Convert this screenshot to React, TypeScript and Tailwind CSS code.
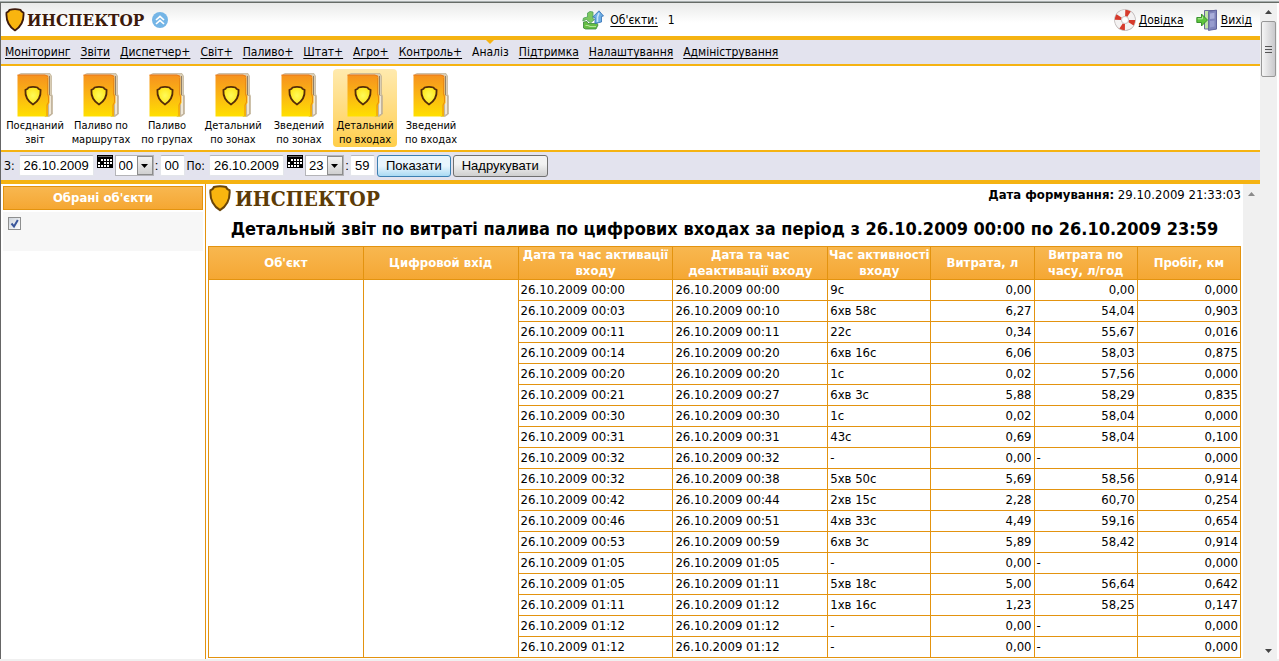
import { useState } from 'react';
import clsx from 'clsx';

const menuItems = [
  'Моніторинг',
  'Звіти',
  'Диспетчер+',
  'Світ+',
  'Паливо+',
  'Штат+',
  'Агро+',
  'Контроль+',
  'Аналіз',
  'Підтримка',
  'Налаштування',
  'Адміністрування',
];

const reports = [
  ['Поєднаний', 'звіт'],
  ['Паливо по', 'маршрутах'],
  ['Паливо', 'по групах'],
  ['Детальний', 'по зонах'],
  ['Зведений', 'по зонах'],
  ['Детальний', 'по входах'],
  ['Зведений', 'по входах'],
];

const columns = [
  { title: "Об'єкт", width: 'w-[15%]' },
  { title: 'Цифровой вхід', width: 'w-[15%]' },
  { title: 'Дата та час активації входу', width: 'w-[15%]' },
  { title: 'Дата та час деактивації входу', width: 'w-[15%]' },
  { title: 'Час активності входу', width: 'w-[10%]' },
  { title: 'Витрата, л', width: 'w-[10%]' },
  { title: 'Витрата по часу, л/год', width: 'w-[10%]' },
  { title: 'Пробіг, км', width: 'w-[10%]' },
];

// start, end, duration, fuel, fuel per hour, distance
const rows = [
  ['00:00', '00:00', '9с', '0,00', '0,00', '0,000'],
  ['00:03', '00:10', '6хв 58с', '6,27', '54,04', '0,903'],
  ['00:11', '00:11', '22с', '0,34', '55,67', '0,016'],
  ['00:14', '00:20', '6хв 16с', '6,06', '58,03', '0,875'],
  ['00:20', '00:20', '1с', '0,02', '57,56', '0,000'],
  ['00:21', '00:27', '6хв 3с', '5,88', '58,29', '0,835'],
  ['00:30', '00:30', '1с', '0,02', '58,04', '0,000'],
  ['00:31', '00:31', '43с', '0,69', '58,04', '0,100'],
  ['00:32', '00:32', '-', '0,00', '-', '0,000'],
  ['00:32', '00:38', '5хв 50с', '5,69', '58,56', '0,914'],
  ['00:42', '00:44', '2хв 15с', '2,28', '60,70', '0,254'],
  ['00:46', '00:51', '4хв 33с', '4,49', '59,16', '0,654'],
  ['00:53', '00:59', '6хв 3с', '5,89', '58,42', '0,914'],
  ['01:05', '01:05', '-', '0,00', '-', '0,000'],
  ['01:05', '01:11', '5хв 18с', '5,00', '56,64', '0,642'],
  ['01:11', '01:12', '1хв 16с', '1,23', '58,25', '0,147'],
  ['01:12', '01:12', '-', '0,00', '-', '0,000'],
  ['01:12', '01:12', '-', '0,00', '-', '0,000'],
];

function Shield({ className, stroke }: { className: string; stroke: string }) {
  return (
    <svg className={className} viewBox="0 0 20 24" aria-hidden="true">
      <path
        d="M4.5 1.8Q10 .4 15.5 1.8Q16 4 18.5 4.6Q19.4 16.5 10 22.4Q.6 16.5 1.5 4.6Q4 4 4.5 1.8Z"
        fill="#f9b50f"
        stroke={stroke}
        strokeWidth="1.8"
        strokeLinejoin="round"
      />
    </svg>
  );
}

function BookIcon() {
  return (
    <svg className="h-11 w-9" viewBox="0 0 36 44" aria-hidden="true">
      <defs>
        <linearGradient id="cover" x1="0" y1="0" x2="0" y2="1">
          <stop offset="0" stopColor="#f6921e" />
          <stop offset=".5" stopColor="#fbb713" />
          <stop offset="1" stopColor="#ffe000" />
        </linearGradient>
        <radialGradient id="emblem">
          <stop offset="0" stopColor="#fffb5a" />
          <stop offset="1" stopColor="#ffe61a" />
        </radialGradient>
      </defs>
      <path d="M2 1.5L4 .5H33L34.5 3V21L35.5 23V41L32 43.5H28Z" fill="#d9cdb4" stroke="#b8a88a" strokeWidth=".6" />
      <path d="M32 3H33V22H32Z" fill="#8f7f6a" />
      <path d="M31.5 22.5H34.5V41L31.5 42.5Z" fill="#efe7d6" stroke="#a3917a" strokeWidth=".5" />
      <path d="M.5 2H29Q31.5 2 31.5 4.5V21L32.5 23V30L31 32V43.5H.5Z" fill="url(#cover)" />
      <path d="M.5 2H28L31 3.5" fill="none" stroke="#e8791a" strokeWidth="1" />
      <path d="M30.5 5V21L31.5 24V29L30 32V43" fill="none" stroke="#e98a12" strokeWidth="1" />
      <path d="M11.5 14.5Q16 13.4 20.5 14.5Q21 16.2 23.6 16.8Q24.2 26.5 16 31.5Q7.8 26.5 8.4 16.8Q11 16.2 11.5 14.5Z" fill="url(#emblem)" stroke="#552c08" strokeWidth="1.8" strokeLinejoin="round" />
    </svg>
  );
}

function ObjectsIcon() {
  return (
    <svg className="h-5 w-[22px]" viewBox="0 0 22 20" aria-hidden="true">
      <path d="M1.5 12L5 11.5L6 13.5H12L14.5 12.5L16 15L14 19H3.5L1.5 18Z" fill="#66bd45" stroke="#36873a" strokeWidth=".8" />
      <path d="M5.5 3L8 1.5L11 2V9L12.5 9.5L8.5 13L4.5 9.5L.8 11L1.5 8L5.5 7Z" fill="#7cc860" stroke="#4c9f5a" strokeWidth=".8" />
      <path d="M3.5 15.5L6 15.5L8 16.5H14" fill="none" stroke="#b4e59a" strokeWidth="1.2" />
      <path d="M17 .8L21.5 6L19.5 6.5V12L13 13.5V7.5L10.8 7Z" fill="#6eaee4" stroke="#2f6db4" strokeWidth=".8" />
      <path d="M17 3L15.5 7V12" fill="none" stroke="#c7e3f9" strokeWidth="1.6" />
    </svg>
  );
}

function HelpIcon() {
  return (
    <svg className="size-[22px]" viewBox="0 0 22 22" aria-hidden="true">
      <circle cx="11" cy="11" r="7" fill="none" stroke="#b9b2b2" strokeWidth="7.6" />
      <circle cx="11" cy="11" r="7" fill="none" stroke="#f4f2f2" strokeWidth="6.4" />
      <circle cx="11" cy="11" r="7" fill="none" stroke="#d63a2c" strokeWidth="6.4" strokeDasharray="4 7" strokeDashoffset="0" />
      <circle cx="11" cy="11" r="3.5" fill="#fff" stroke="#c9c2c2" strokeWidth=".8" />
    </svg>
  );
}

function ExitIcon() {
  return (
    <svg className="h-[22px] w-[22px]" viewBox="0 0 22 22" aria-hidden="true">
      <path d="M8.5 1.5H20.5V20H8.5Z" fill="#bfe3a6" stroke="#6a6a9c" strokeWidth="1" />
      <path d="M20.5 1L12.5 2.5V21.5L20.5 20Z" fill="#7f84bb" stroke="#5a5e98" strokeWidth=".8" />
      <path d="M14 4.5L18.5 3.8V9.5L14 10Z" fill="#a9aeda" />
      <path d="M14 12L18.5 11.5V17.5L14 18.5Z" fill="#989dce" />
      <path d="M.8 8.5H5.5V5L11.5 11L5.5 17V13.5H.8Z" fill="#5dc43c" stroke="#2f8a26" strokeWidth=".9" />
      <path d="M1.8 9.8H6.5V7.5" fill="none" stroke="#b9ee9d" strokeWidth="1" />
    </svg>
  );
}

function CalendarButton({ label }: { label: string }) {
  return (
    <button type="button" aria-label={label} className="ml-[3px] h-[13px] w-4 self-start">
      <svg className="h-full w-full" viewBox="0 0 16 13" shapeRendering="crispEdges" aria-hidden="true">
        <path d="M0 0H16V13H0Z" fill="#000" />
        <path d="M1 1H15V2H1Z" fill="#666" />
        <path d="M4 4h2v2h-2zM7 4h2v2h-2zM10 4h2v2h-2zM13 4h2v2h-2zM1 7h2v2h-2zM7 7h2v2h-2zM10 7h2v2h-2zM13 7h2v2h-2zM1 10h2v2h-2zM4 10h2v2h-2zM7 10h2v2h-2zM10 10h2v2h-2z" fill="#fff" />
      </svg>
    </button>
  );
}

const inputClass = 'h-[21px] rounded-xs border border-[#e3e6ea] border-t-[#b5b8bd] bg-white px-1';

interface PeriodFieldsProps {
  id: string;
  label: string;
  date: string;
  hour: string;
  minute: string;
}

function PeriodFields({ id, label, date, hour, minute }: PeriodFieldsProps) {
  return (
    <div className="flex items-center font-['Liberation_Sans',Arial,sans-serif]">
      <label htmlFor={id} className="mr-1 font-['DejaVu_Sans_Condensed',Tahoma,sans-serif] text-xs">
        {label}
      </label>
      <input id={id} defaultValue={date} className={clsx(inputClass, 'w-[75px]')} />
      <CalendarButton label="Календар" />
      <div className="relative ml-0.5 h-[21px] w-[39px]">
        <select
          aria-label="Години"
          defaultValue={hour}
          className="h-full w-full appearance-none border border-[#b4b4b8] bg-white pl-[3px]"
        >
          <option>00</option>
          <option>12</option>
          <option>23</option>
        </select>
        <span className="pointer-events-none absolute inset-y-px right-px flex w-4 items-center justify-center border border-[#8c8c8c] bg-linear-to-b from-[#f4f4f4] to-[#d0d0d0]">
          <svg className="h-1 w-[7px]" viewBox="0 0 7 4" aria-hidden="true">
            <path d="M0 0H7L3.5 4Z" fill="#000" />
          </svg>
        </span>
      </div>
      <span className="w-1.5 text-center">:</span>
      <input aria-label="Хвилини" defaultValue={minute} className={clsx(inputClass, 'w-[25px]')} />
    </div>
  );
}

function Header() {
  return (
    <header className="flex h-[37px] items-center justify-between border-b-4 border-[#f5b312] bg-linear-to-b from-[#e9eae9] to-white to-60% pr-2 pl-1 text-xs">
      <div className="flex flex-1 items-center">
        <Shield className="h-6 w-5" stroke="#3d1a0b" />
        <span className="ml-0.5 font-['DejaVu_Serif_Condensed','DejaVu_Serif',serif] text-[17px] leading-6 font-bold text-[#3d1a0b]">
          ИНСПЕКТОР
        </span>
        <button type="button" aria-label="Згорнути" className="ml-2">
          <svg className="size-4" viewBox="0 0 16 16" aria-hidden="true">
            <circle cx="8" cy="8" r="8" fill="#74b5e6" />
            <path d="M4 8L8 4.3L12 8M4 12L8 8.3L12 12" fill="none" stroke="#fff" strokeWidth="1.7" />
          </svg>
        </button>
      </div>
      <div className="flex items-center gap-1.5">
        <ObjectsIcon />
        <a href="#objects" className="underline underline-offset-2">Об'єкти:</a>
        <span className="ml-1">1</span>
      </div>
      <div className="flex flex-1 items-center justify-end">
        <HelpIcon />
        <a href="#help" className="ml-[3px] underline underline-offset-2">Довідка</a>
        <span className="ml-3"><ExitIcon /></span>
        <a href="#exit" className="ml-[3px] underline underline-offset-2">Вихід</a>
      </div>
    </header>
  );
}

function ReportPane() {
  return (
    <main className="min-w-0 flex-1 overflow-hidden px-0.5 pt-px">
      <div className="flex items-start justify-between">
        <div className="flex items-center">
          <Shield className="h-[27px] w-6" stroke="#6b4507" />
          <span className="ml-[3px] font-['DejaVu_Serif_Condensed','DejaVu_Serif',serif] text-[21px] leading-6 font-bold text-[#5c3b06]">
            ИНСПЕКТОР
          </span>
        </div>
        <p className="leading-5">
          <b>Дата формування:</b> 29.10.2009 21:33:03
        </p>
      </div>
      <h1 className="my-[5px] text-center text-lg leading-6 font-bold whitespace-nowrap">
        Детальный звіт по витраті палива по цифрових входах за період з 26.10.2009 00:00 по 26.10.2009 23:59
      </h1>
      <table className="w-full table-fixed border-collapse">
        <thead>
          <tr className="h-[33px] bg-linear-to-b from-[#f8b74f] to-[#f5a732] text-white">
            {columns.map(column => (
              <th key={column.title} className={clsx('border border-[#e3930f] p-0 leading-4', column.width)}>
                {column.title}
              </th>
            ))}
          </tr>
        </thead>
        <tbody>
          {rows.map(([start, end, duration, fuel, perHour, distance], index) => (
            <tr key={index} className="h-[21px] leading-5">
              {index === 0 && (
                <>
                  <td rowSpan={rows.length} className="border border-[#e3930f]" />
                  <td rowSpan={rows.length} className="border border-[#e3930f]" />
                </>
              )}
              <td className="border border-[#e3930f] px-0.5 py-0">26.10.2009 {start}</td>
              <td className="border border-[#e3930f] px-0.5 py-0">26.10.2009 {end}</td>
              <td className="border border-[#e3930f] px-0.5 py-0">{duration}</td>
              <td className="border border-[#e3930f] px-0.5 py-0 text-right">{fuel}</td>
              <td className={clsx('border border-[#e3930f] px-0.5 py-0', perHour !== '-' && 'text-right')}>{perHour}</td>
              <td className="border border-[#e3930f] px-0.5 py-0 text-right">{distance}</td>
            </tr>
          ))}
        </tbody>
      </table>
    </main>
  );
}

function PageScrollbar() {
  return (
    <div aria-hidden="true" className="mr-0.5 flex w-[17px] flex-col items-center bg-[#f0f0f0]">
      <svg className="mt-[7px] h-1 w-[7px]" viewBox="0 0 7 4">
        <path d="M0 4H7L3.5 0Z" fill="#444" />
      </svg>
      <div className="mt-[7px] flex h-14 w-[15px] flex-col items-center justify-center gap-0.5 rounded-xs border border-[#979797] bg-linear-to-r from-[#f5f5f5] to-[#c9c9cc]">
        <span className="h-px w-[7px] bg-[#555]" />
        <span className="h-px w-[7px] bg-[#555]" />
        <span className="h-px w-[7px] bg-[#555]" />
      </div>
      <svg className="mt-auto mb-1.5 h-1 w-[7px]" viewBox="0 0 7 4">
        <path d="M0 0H7L3.5 4Z" fill="#444" />
      </svg>
    </div>
  );
}

export default function App() {
  const [activeReport, setActiveReport] = useState(5);
  const [selected, setSelected] = useState(true);

  return (
    <div className="flex h-screen flex-col overflow-hidden border-b-2 border-[#f0f0f0] bg-white font-['DejaVu_Sans_Condensed',Tahoma,sans-serif] text-[13px] text-black">
      <div className="h-[3px] shrink-0 border-t border-b border-t-[#e8eaea] border-b-[#666b66] bg-[#a6adad]" />
      <div className="flex min-h-0 flex-1 border-l border-[#666]">
        <div className="flex min-w-0 flex-1 flex-col">
          <Header />

          <nav className="flex h-[26px] shrink-0 items-center gap-2.5 border-b-2 border-[#f5b312] bg-[#e3e3ee] px-1 text-xs">
            {menuItems.map(item =>
              item === 'Аналіз' ? (
                <span key={item} className="relative flex h-full items-center">
                  {item}
                  <svg className="absolute top-0 left-1/2 h-1 w-2 -translate-x-1/2" viewBox="0 0 8 4" aria-hidden="true">
                    <path d="M0 0H8L4 4Z" fill="#f5b312" />
                  </svg>
                </span>
              ) : (
                <a key={item} href="#menu" className="underline underline-offset-2">{item}</a>
              )
            )}
          </nav>

          <div className="flex shrink-0 gap-0.5 border-b-2 border-[#f5b312] py-[3px] pl-0.5 text-[11px] leading-[14px]">
            {reports.map(([first, second], index) => (
              <button
                key={index}
                type="button"
                onClick={() => setActiveReport(index)}
                className={clsx(
                  'flex h-[78px] w-16 flex-col items-center rounded-sm pt-1 whitespace-nowrap',
                  index === activeReport && 'bg-linear-to-b from-[#ffeaae] to-[#ffce48]'
                )}
              >
                <BookIcon />
                <span className="mt-0.5">
                  {first}
                  <br />
                  {second}
                </span>
              </button>
            ))}
          </div>

          <form
            onSubmit={e => e.preventDefault()}
            className="flex h-8 shrink-0 items-start gap-0.5 border-b-4 border-[#f5b312] bg-[#e3e3ee] px-[3px] pt-[3px]"
          >
            <PeriodFields id="from" label="З:" date="26.10.2009" hour="00" minute="00" />
            <PeriodFields id="to" label="По:" date="26.10.2009" hour="23" minute="59" />
            <button
              type="submit"
              className="h-[22px] rounded-[3px] border border-[#3c7fb1] bg-linear-to-b from-[#e8f5fd] from-50% to-[#a9daf3] px-2 font-['Liberation_Sans',Arial,sans-serif]"
            >
              Показати
            </button>
            <button
              type="button"
              className="h-[22px] rounded-[3px] border border-[#707070] bg-linear-to-b from-[#f2f2f2] from-40% to-[#cfcfcf] px-2 font-['Liberation_Sans',Arial,sans-serif]"
            >
              Надрукувати
            </button>
          </form>

          <div className="flex min-h-0 flex-1">
            <aside className="w-[205px] shrink-0 border-r border-[#e3930f] py-0.5 pr-0.5 pl-0.5">
              <h2 className="flex h-6 items-center justify-center border border-[#e3930f] bg-linear-to-b from-[#f8b74f] to-[#f5a732] font-bold text-white">
                Обрані об'єкти
              </h2>
              <div className="mt-0.5 h-[39px] bg-[#f7f7f7] px-[5px] pt-[5px]">
                <label className="relative block size-[13px]">
                  <input
                    type="checkbox"
                    aria-label="Об'єкт"
                    checked={selected}
                    onChange={e => setSelected(e.target.checked)}
                    className="block size-[13px] appearance-none border border-[#8e8f8f] bg-linear-to-br from-[#cfd5dc] to-white"
                  />
                  {selected && (
                    <svg className="pointer-events-none absolute inset-0 size-[13px]" viewBox="0 0 13 13" aria-hidden="true">
                      <path d="M3.5 6.5L6 9.5L9.8 3" fill="none" stroke="#39569b" strokeWidth="2" />
                    </svg>
                  )}
                </label>
              </div>
            </aside>
            <ReportPane />
            <div aria-hidden="true" className="flex w-[17px] shrink-0 flex-col items-center bg-[#f0f0f0] pt-2">
              <svg className="h-1 w-[7px]" viewBox="0 0 7 4">
                <path d="M0 4H7L3.5 0Z" fill="#8a8a8a" />
              </svg>
            </div>
          </div>
        </div>
        <PageScrollbar />
      </div>
    </div>
  );
}
